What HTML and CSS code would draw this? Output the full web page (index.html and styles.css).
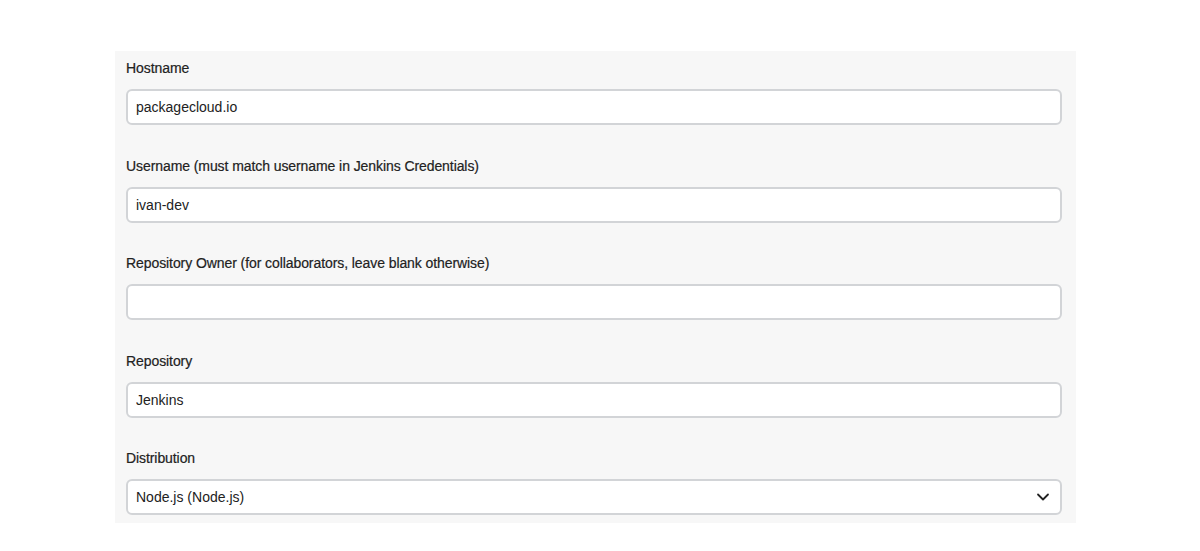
FILE: index.html
```html
<!DOCTYPE html>
<html lang="en">
  <head>
    <meta charset="UTF-8" />
    <meta name="viewport" content="width=device-width, initial-scale=1.0" />
    <title>Packagecloud Settings</title>
    <link rel="stylesheet" href="styles.css">
  </head>
  <body>
    <div class="panel">
      <div class="field">
        <label class="label">Hostname</label>
        <input class="input" type="text" value="packagecloud.io" />
      </div>
      <div class="field">
        <label class="label">Username (must match username in Jenkins Credentials)</label>
        <input class="input" type="text" value="ivan-dev" />
      </div>
      <div class="field">
        <label class="label">Repository Owner (for collaborators, leave blank otherwise)</label>
        <input class="input" type="text" value="" />
      </div>
      <div class="field">
        <label class="label">Repository</label>
        <input class="input" type="text" value="Jenkins" />
      </div>
      <div class="field">
        <label class="label">Distribution</label>
        <div class="select">
          <span>Node.js (Node.js)</span>
          <svg class="chevron" width="14" height="14" viewBox="0 0 14 14">
            <path d="M2 4.5 L7 9.5 L12 4.5" fill="none" stroke="#222" stroke-width="1.8" stroke-linecap="round" stroke-linejoin="round" />
          </svg>
        </div>
      </div>
    </div>
  </body>
</html>
```

FILE: styles.css
```css
body {
  margin: 0;
  font-family: "Liberation Sans", Arial, sans-serif;
  background-color: #fff;
}
.panel {
  width: 961px;
  margin: 51px 0 0 115px;
  padding: 8px 14px 8px 11px;
  box-sizing: border-box;
  background-color: #f7f7f7;
}
.field {
  margin-bottom: 31.5px;
}
.field:last-child {
  margin-bottom: 0;
}
.label {
  display: block;
  font-size: 14px;
  line-height: 18px;
  letter-spacing: -0.08px;
  color: #222;
  margin-bottom: 12px;
  -webkit-text-stroke: 0.2px #222;
}
.input,
.select {
  display: block;
  width: 100%;
  height: 36px;
  box-sizing: border-box;
  border: 2px solid #d2d4d7;
  border-radius: 6px;
  background-color: #fff;
  padding: 0 8px;
  font-family: "Liberation Sans", Arial, sans-serif;
  font-size: 14px;
  color: #222;
  outline: none;
}
.select {
  display: flex;
  align-items: center;
  justify-content: space-between;
  padding-right: 10px;
}
```
